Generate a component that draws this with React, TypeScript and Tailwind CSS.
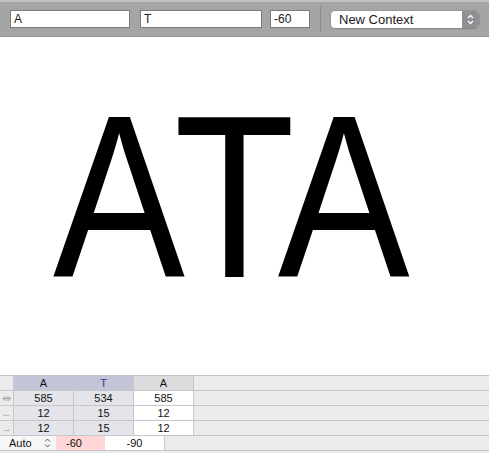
import React from "react";

const font = { fontFamily: '"Liberation Sans", Arial, sans-serif' };

function Field({ value, className }: { value: string; className: string }) {
  return (
    <div
      className={`h-[18px] bg-white border border-[#7d7d7d] pl-[3px] flex items-center text-[12px] text-[#1a1a1a] ${className}`}
    >
      {value}
    </div>
  );
}

function Cell({
  children,
  className = "",
}: {
  children?: React.ReactNode;
  className?: string;
}) {
  return (
    <div
      className={`h-full flex items-center justify-center border-r border-[#c6c6cc] text-[11px] ${className}`}
    >
      {children}
    </div>
  );
}

const rows = [
  { icon: "⇹", vals: ["585", "534", "585"] },
  { icon: "←", vals: ["12", "15", "12"] },
  { icon: "→", vals: ["12", "15", "12"] },
];

export default function App() {
  return (
    <div className="w-[489px] h-[453px] flex flex-col bg-white overflow-hidden" style={font}>
      {/* toolbar */}
      <div className="h-[37px] shrink-0 bg-[#a5a5a5] border-t-2 border-[#c2c2c2] border-b border-b-[#939393] flex items-center pl-[10px]">
        <Field value="A" className="w-[120px]" />
        <Field value="T" className="w-[122px] ml-[10px]" />
        <Field value="-60" className="w-[40px] ml-[8px]" />
        <div className="w-px h-[26px] bg-[#8e8e8e] ml-[10px]" />
        <div className="ml-[10px] w-[148px] h-[17px] rounded-[4px] bg-white shadow-[0_0_0_0.5px_#8a8a8a,0_1px_1px_rgba(0,0,0,0.2)] flex items-center overflow-hidden">
          <span className="flex-1 pl-[8px] text-[13px] text-[#1a1a1a] leading-none">New Context</span>
          <div className="w-[17px] h-full bg-[#8f8f94] flex items-center justify-center">
            <svg width="7" height="11" viewBox="0 0 7 11" fill="none" stroke="white" strokeWidth="1.3">
              <path d="M1 4l2.5-2.5L6 4M1 7l2.5 2.5L6 7" />
            </svg>
          </div>
        </div>
      </div>

      {/* canvas */}
      <div className="flex-1 pt-[44px] pl-[53px]">
        <div className="inline-block origin-left scale-x-[0.853] text-[232px] leading-[232px] text-black whitespace-nowrap">
          <span className="inline-block">A</span>
          <span className="inline-block ml-[-13px]">T</span>
          <span className="inline-block ml-[-20px]">A</span>
        </div>
      </div>

      {/* table */}
      <div className="h-[78px] shrink-0 bg-[#ebebeb] flex flex-col">
        <div className="h-[15px] border-t border-[#c6c6cc] flex">
          <Cell className="w-[14px] bg-[#ebebeb]" />
          <Cell className="w-[60px] bg-[#c4c4d8] text-[#111]">A</Cell>
          <Cell className="w-[60px] bg-[#c4c4d8] text-[#2c3f8c]">T</Cell>
          <Cell className="w-[60px] bg-[#dcdcdf] text-[#111]">A</Cell>
        </div>
        {rows.map((r) => (
          <div key={r.icon} className="h-[15px] border-t border-[#c6c6cc] flex">
            <Cell className="w-[14px] bg-[#ebebeb] text-[#a8a8a8]">{r.icon}</Cell>
            <Cell className="w-[60px] bg-[#e4e4ea] text-[#111]">{r.vals[0]}</Cell>
            <Cell className="w-[60px] bg-[#e4e4ea] text-[#111]">{r.vals[1]}</Cell>
            <Cell className="w-[60px] bg-white text-[#111]">{r.vals[2]}</Cell>
          </div>
        ))}
        <div className="h-[16px] border-t border-b border-[#c6c6cc] flex">
          <div className="w-[56px] h-full bg-[#f6f6f6] flex items-center pl-[9px] text-[11px] text-[#111]">
            <span className="flex-1">Auto</span>
            <svg width="7" height="10" viewBox="0 0 7 10" fill="none" stroke="#555" strokeWidth="1" className="mr-[5px]">
              <path d="M1 3.5l2.5-2.5L6 3.5M1 6.5l2.5 2.5L6 6.5" />
            </svg>
          </div>
          <div className="w-[49px] h-full bg-[#ffd5d5] flex items-center pl-[10px] text-[11px] text-[#111]">-60</div>
          <Cell className="w-[60px] bg-white text-[#111]">-90</Cell>
        </div>
      </div>
    </div>
  );
}
